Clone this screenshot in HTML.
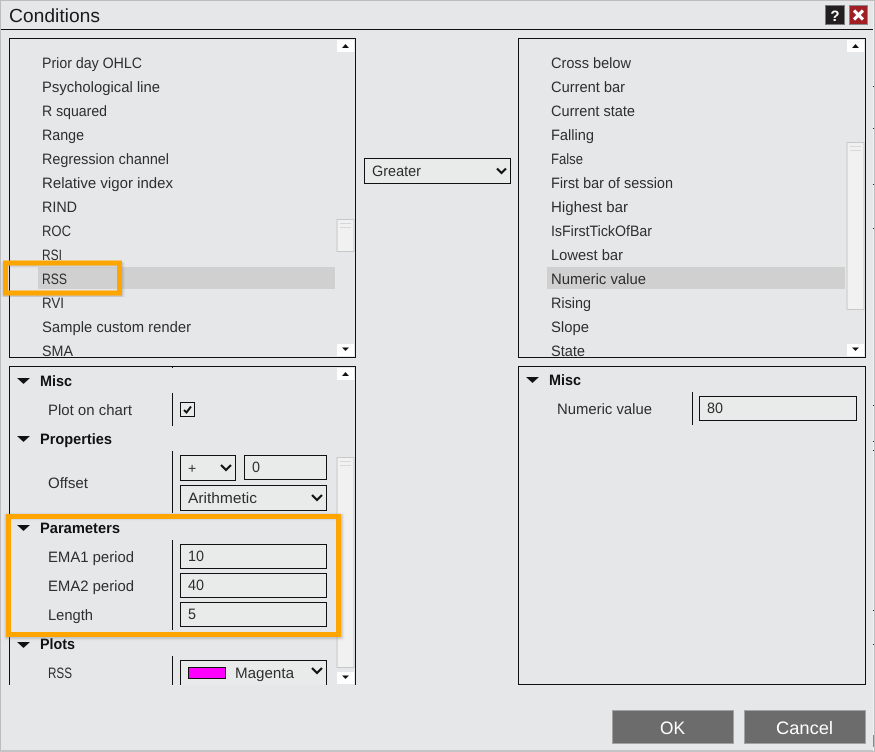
<!DOCTYPE html>
<html><head><meta charset="utf-8"><title>Conditions</title>
<style>
html,body{margin:0;padding:0;width:875px;height:752px;overflow:hidden;background:#e6e7e9}
svg{display:block}
text{font-family:"Liberation Sans",sans-serif;font-size:15px;fill:#2e2e2e;text-rendering:geometricPrecision}
.b{font-weight:bold;fill:#111}
</style></head><body>
<svg width="875" height="752" viewBox="0 0 875 752" xmlns="http://www.w3.org/2000/svg">
<defs>
<clipPath id="c1"><rect x="10" y="39" width="326" height="318"/></clipPath>
<clipPath id="c2"><rect x="519" y="39" width="327" height="318"/></clipPath>
<clipPath id="c3"><rect x="0" y="360" width="360" height="325"/></clipPath>
<filter id="sh" x="-5%" y="-5%" width="110%" height="110%"><feGaussianBlur stdDeviation="1"/></filter>
</defs>
<rect width="875" height="752" fill="#e6e7e9"/>
<!-- window edges -->
<rect x="0" y="0" width="875" height="1" fill="#bdbdbd"/>
<rect x="0" y="0" width="1" height="752" fill="#bdbdbd"/>
<rect x="0" y="750" width="875" height="2" fill="#c4c4c4"/>
<rect x="873" y="1" width="1" height="750" fill="#f2f2f2"/>
<rect x="874" y="0" width="1" height="752" fill="#bdbdbd"/>
<g fill="#222"><rect x="873" y="86" width="1" height="1"/><rect x="873" y="128" width="1" height="1"/><rect x="873" y="184" width="1" height="1"/><rect x="873" y="228" width="1" height="1"/><rect x="873" y="405" width="1" height="1"/><rect x="873" y="441" width="1" height="1"/><rect x="873" y="450" width="1" height="1"/><rect x="873" y="610" width="1" height="1"/><rect x="873" y="644" width="1" height="1"/></g>
<rect x="873" y="735" width="1" height="12" fill="#888"/>
<!-- title -->
<text x="9" y="22" style="font-size:19px;fill:#1a1a1a" textLength="91" lengthAdjust="spacingAndGlyphs">Conditions</text>
<rect x="1" y="29" width="872" height="1" fill="#111"/>
<rect x="825.500" y="5.500" width="19" height="19" fill="#231f20" stroke="#7a7a7a"/>
<text x="835" y="21" text-anchor="middle" style="font-size:15px;font-weight:bold;fill:#fff">?</text>
<rect x="849.500" y="5.500" width="18" height="19" fill="#a01f24" stroke="#8a8a8a"/>
<path d="M854 10.500L863 19.500M863 10.500L854 19.500" stroke="#fff" stroke-width="3.200"/>

<!-- panels -->
<g fill="none" stroke="#111">
<rect x="9.500" y="38.500" width="346" height="319"/>
<rect x="518.500" y="38.500" width="347" height="319"/>
<path d="M9.500 685V366.500H355.500V685"/>
<rect x="518.500" y="366.500" width="347" height="318"/>
</g>

<!-- left list -->
<rect x="38" y="267" width="297" height="22" fill="#d0d0d0"/>
<g clip-path="url(#c1)">
<text x="42" y="68" textLength="100" lengthAdjust="spacingAndGlyphs">Prior day OHLC</text>
<text x="42" y="92" textLength="118" lengthAdjust="spacingAndGlyphs">Psychological line</text>
<text x="42" y="116" textLength="65" lengthAdjust="spacingAndGlyphs">R squared</text>
<text x="42" y="140" textLength="42" lengthAdjust="spacingAndGlyphs">Range</text>
<text x="42" y="164" textLength="127" lengthAdjust="spacingAndGlyphs">Regression channel</text>
<text x="42" y="188" textLength="131" lengthAdjust="spacingAndGlyphs">Relative vigor index</text>
<text x="42" y="212" textLength="35" lengthAdjust="spacingAndGlyphs">RIND</text>
<text x="42" y="236" textLength="29" lengthAdjust="spacingAndGlyphs">ROC</text>
<text x="42" y="260" textLength="20" lengthAdjust="spacingAndGlyphs">RSI</text>
<text x="42" y="284" textLength="25" lengthAdjust="spacingAndGlyphs">RSS</text>
<text x="42" y="308" textLength="22" lengthAdjust="spacingAndGlyphs">RVI</text>
<text x="42" y="332" textLength="149" lengthAdjust="spacingAndGlyphs">Sample custom render</text>
<text x="42" y="356" textLength="31" lengthAdjust="spacingAndGlyphs">SMA</text>
</g>
<rect x="337" y="40" width="17" height="12" fill="#fff"/>
<path d="M342 48L345.500 44L349 48Z" fill="#111"/>
<rect x="337" y="344" width="17" height="12" fill="#fff"/>
<path d="M342 347.500L349 347.500L345.500 351Z" fill="#111"/>
<rect x="337" y="219.500" width="17" height="32" fill="#f1f1f1" stroke="#c8c8c8"/>
<path d="M340 223.500H351M340 227.500H351" stroke="#d8d8d8"/>

<!-- right list -->
<rect x="547" y="267" width="298" height="22" fill="#d0d0d0"/>
<g clip-path="url(#c2)">
<text x="551" y="68" textLength="80" lengthAdjust="spacingAndGlyphs">Cross below</text>
<text x="551" y="92" textLength="74" lengthAdjust="spacingAndGlyphs">Current bar</text>
<text x="551" y="116" textLength="84" lengthAdjust="spacingAndGlyphs">Current state</text>
<text x="551" y="140" textLength="43" lengthAdjust="spacingAndGlyphs">Falling</text>
<text x="551" y="164" textLength="32" lengthAdjust="spacingAndGlyphs">False</text>
<text x="551" y="188" textLength="122" lengthAdjust="spacingAndGlyphs">First bar of session</text>
<text x="551" y="212" textLength="77" lengthAdjust="spacingAndGlyphs">Highest bar</text>
<text x="551" y="236" textLength="101" lengthAdjust="spacingAndGlyphs">IsFirstTickOfBar</text>
<text x="551" y="260" textLength="72" lengthAdjust="spacingAndGlyphs">Lowest bar</text>
<text x="551" y="284" textLength="95" lengthAdjust="spacingAndGlyphs">Numeric value</text>
<text x="551" y="308" textLength="40" lengthAdjust="spacingAndGlyphs">Rising</text>
<text x="551" y="332" textLength="38" lengthAdjust="spacingAndGlyphs">Slope</text>
<text x="551" y="356" textLength="34" lengthAdjust="spacingAndGlyphs">State</text>
</g>
<rect x="847" y="40" width="17" height="12" fill="#fff"/>
<path d="M852 48L855.500 44L859 48Z" fill="#111"/>
<rect x="847" y="344" width="17" height="12" fill="#fff"/>
<path d="M852 347.500L859 347.500L855.500 351Z" fill="#111"/>
<rect x="847" y="142.500" width="17" height="167" fill="#f1f1f1" stroke="#c8c8c8"/>
<path d="M850 146.500H861M850 150.500H861" stroke="#d8d8d8"/>

<!-- Greater -->
<rect x="364.500" y="158.500" width="146" height="25" fill="#e9ebea" stroke="#111"/>
<text x="372" y="176" textLength="49" lengthAdjust="spacingAndGlyphs">Greater</text>
<path d="M497 168.500L501.500 173L506 168.500" fill="none" stroke="#111" stroke-width="2.200"/>

<!-- left props -->
<g clip-path="url(#c3)">
<g fill="#111">
<path d="M17 378H30L23.500 384Z"/><path d="M17 436H30L23.500 442Z"/><path d="M17 525H30L23.500 531Z"/><path d="M17 642H30L23.500 648Z"/>
<rect x="172" y="366" width="1" height="2"/>
<rect x="172" y="393" width="1" height="33"/>
<rect x="172" y="451" width="1" height="62"/>
<rect x="172" y="540" width="1" height="90"/>
<rect x="172" y="656" width="1" height="30"/>
</g>
<text class="b" x="40" y="386" textLength="32" lengthAdjust="spacingAndGlyphs">Misc</text>
<text x="48" y="415" textLength="84" lengthAdjust="spacingAndGlyphs">Plot on chart</text>
<rect x="180.500" y="402.500" width="14" height="14" fill="#e9ebea" stroke="#111"/>
<path d="M184 410L186.500 412.500L191 406.500" fill="none" stroke="#111" stroke-width="2"/>

<text class="b" x="40" y="444" textLength="72" lengthAdjust="spacingAndGlyphs">Properties</text>
<text x="48" y="488" textLength="40" lengthAdjust="spacingAndGlyphs">Offset</text>
<rect x="180.500" y="455.500" width="55" height="25" fill="#e9ebea" stroke="#111"/>
<text x="188" y="473" style="font-size:14px">+</text>
<path d="M221 465L226 470L231 465" fill="none" stroke="#111" stroke-width="2.200"/>
<rect x="244.500" y="455.500" width="82" height="24" fill="#e9ebea" stroke="#111"/>
<text x="252" y="472" textLength="8" lengthAdjust="spacingAndGlyphs">0</text>
<rect x="180.500" y="485.500" width="146" height="25" fill="#e9ebea" stroke="#111"/>
<text x="188" y="503" textLength="69" lengthAdjust="spacingAndGlyphs">Arithmetic</text>
<path d="M312 495L317 500L322 495" fill="none" stroke="#111" stroke-width="2.200"/>

<text class="b" x="40" y="533" textLength="80" lengthAdjust="spacingAndGlyphs">Parameters</text>
<text x="48" y="562" textLength="86" lengthAdjust="spacingAndGlyphs">EMA1 period</text>
<text x="48" y="591" textLength="86" lengthAdjust="spacingAndGlyphs">EMA2 period</text>
<text x="48" y="620" textLength="45" lengthAdjust="spacingAndGlyphs">Length</text>
<rect x="180.500" y="544.500" width="146" height="24" fill="#e9ebea" stroke="#111"/>
<rect x="180.500" y="573.500" width="146" height="24" fill="#e9ebea" stroke="#111"/>
<rect x="180.500" y="602.500" width="146" height="24" fill="#e9ebea" stroke="#111"/>
<text x="188" y="561" textLength="16" lengthAdjust="spacingAndGlyphs">10</text>
<text x="188" y="590" textLength="16" lengthAdjust="spacingAndGlyphs">40</text>
<text x="188" y="619" textLength="8" lengthAdjust="spacingAndGlyphs">5</text>

<text class="b" x="40" y="649" textLength="35" lengthAdjust="spacingAndGlyphs">Plots</text>
<text x="48" y="678" textLength="24" lengthAdjust="spacingAndGlyphs">RSS</text>
<rect x="180.500" y="660.500" width="146" height="30" fill="#e9ebea" stroke="#111"/>
<rect x="188.500" y="667.500" width="37" height="11" fill="#ff00ff" stroke="#111"/>
<text x="235" y="678" textLength="59" lengthAdjust="spacingAndGlyphs">Magenta</text>
<path d="M312 668L317 673L322 668" fill="none" stroke="#111" stroke-width="2.200"/>
</g>
<rect x="337" y="368" width="17" height="12" fill="#fff"/>
<path d="M342 376L345.500 372L349 376Z" fill="#111"/>
<rect x="337" y="672" width="17" height="12" fill="#fff"/>
<path d="M342 675.500L349 675.500L345.500 679Z" fill="#111"/>
<rect x="337" y="457.500" width="17" height="210" fill="#f1f1f1" stroke="#c8c8c8"/>
<path d="M340 461.500H351M340 465.500H351" stroke="#d8d8d8"/>

<!-- right props -->
<path d="M526 377H539L532.500 383Z" fill="#111"/>
<text class="b" x="549" y="385" textLength="32" lengthAdjust="spacingAndGlyphs">Misc</text>
<text x="557" y="414" textLength="95" lengthAdjust="spacingAndGlyphs">Numeric value</text>
<rect x="692" y="392" width="1" height="33" fill="#111"/>
<rect x="699.500" y="396.500" width="157" height="24" fill="#e9ebea" stroke="#111"/>
<text x="707" y="413" textLength="16" lengthAdjust="spacingAndGlyphs">80</text>

<!-- orange highlights -->
<rect x="7.500" y="516.500" width="333" height="120" fill="none" stroke="#777" stroke-opacity=".35" stroke-width="5" filter="url(#sh)"/>
<rect x="8.500" y="516.500" width="330" height="118" fill="none" stroke="#ffa500" stroke-width="5"/>
<rect x="5" y="264" width="116" height="31" fill="none" stroke="#777" stroke-opacity=".35" stroke-width="5" filter="url(#sh)"/>
<rect x="5.500" y="263" width="114" height="30" fill="none" stroke="#ffa500" stroke-width="5"/>

<!-- buttons -->
<rect x="612.500" y="710.500" width="121" height="33" fill="#6c6c6c" stroke="#a2a2a2"/>
<rect x="744.500" y="710.500" width="121" height="33" fill="#6c6c6c" stroke="#a2a2a2"/>
<text x="660" y="734" style="font-size:18px;fill:#fff" textLength="25" lengthAdjust="spacingAndGlyphs">OK</text>
<text x="776" y="734" style="font-size:18px;fill:#fff" textLength="57" lengthAdjust="spacingAndGlyphs">Cancel</text>
</svg>
</body></html>
